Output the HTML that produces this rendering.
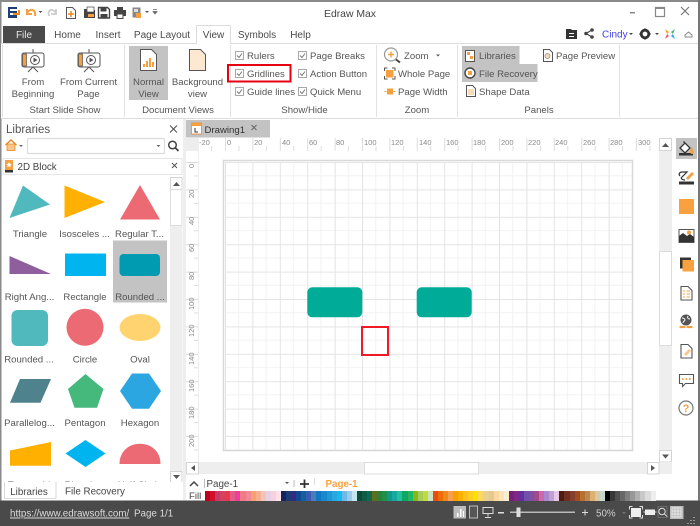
<!DOCTYPE html>
<html><head><meta charset="utf-8"><style>
html,body{margin:0;padding:0;width:700px;height:526px;overflow:hidden;background:#fff}
svg{position:absolute;left:0;top:0;font-family:"Liberation Sans",sans-serif;filter:blur(.35px)}
text{font-size:9.6px;fill:#4a4a4a}
.c{text-anchor:middle}
.r text{font-size:7.5px;fill:#8a8a8a}
.s{font-size:9.6px;fill:#555}
#pal{position:absolute;left:205px;top:491px;height:9.5px;display:flex;filter:blur(.35px)}
#pal i{display:block;width:5.07px;height:9.5px;flex:none}
</style></head><body>
<svg width="700" height="526" viewBox="0 0 700 526">
<defs>
<pattern id="g" patternUnits="userSpaceOnUse" x="225" y="162" width="27.4" height="27.4">
<rect width="27.4" height="27.4" fill="#fff"/>
<path d="M13.7 0V27.4M0 13.7H27.4" stroke="#f2f2f2" stroke-width="1" fill="none"/>
<path d="M.5 0V27.4M0 .5H27.4" stroke="#e4e4e4" stroke-width="1" fill="none"/>
</pattern>
<pattern id="rh" patternUnits="userSpaceOnUse" x="225" y="138" width="27.4" height="13">
<path d="M.5 0V13M14 8V13" stroke="#dcdcdc" fill="none"/>
</pattern>
<pattern id="rv" patternUnits="userSpaceOnUse" x="186" y="162" width="13" height="27.4">
<path d="M0 .5H13M8 14H13" stroke="#dcdcdc" fill="none"/>
</pattern>
</defs>
<rect width="700" height="526" fill="#fff"/>

<!-- window border -->
<rect x="0" y="0" width="700" height="2" fill="#8a8a8a"/>
<rect x="0" y="0" width="1.5" height="526" fill="#8a8a8a"/>
<rect x="698" y="0" width="2" height="526" fill="#777"/>

<!-- quick access -->
<rect x="8" y="7" width="9" height="11" fill="#1f3f78"/><rect x="10" y="9" width="7" height="2" fill="#fff"/><rect x="10" y="13" width="7" height="2" fill="#fff"/>
<path d="M13 14h6v-4" stroke="#f08a1c" stroke-width="2" fill="none"/>
<path d="M27 9l0 5 5 0M27 13c3-5 9-4 8 3" stroke="#f5a040" stroke-width="2" fill="none"/>
<path d="M38.500 11l4 0-2 2z" fill="#555"/>
<path d="M56 9v5h-5M56 13c-3-5-9-4-7 3" stroke="#ccc" stroke-width="1.800" fill="none"/>
<path d="M66.500 7.500h6l3 3v8h-9z" fill="#fff" stroke="#555"/><path d="M71 11v6M68 14h6" stroke="#f08a1c" stroke-width="1.500"/>
<path d="M84 9h4l1 1h6v8H84z" fill="#444"/><rect x="87" y="7" width="7" height="5" fill="#fff" stroke="#444" stroke-width=".7"/><rect x="88" y="14" width="6" height="3" fill="#f5a040"/>
<path d="M98.500 7.500h9l2 2v8.500h-11z" fill="#fff" stroke="#444" stroke-width="1.400"/><rect x="100.500" y="8" width="6" height="3.500" fill="#444"/><rect x="100.500" y="14" width="7" height="4" fill="#444"/>
<rect x="114" y="10" width="12" height="6" fill="#444"/><rect x="117" y="7" width="6" height="3" fill="#444"/><rect x="117" y="14" width="6" height="4.500" fill="#fff" stroke="#444"/>
<rect x="132.500" y="7.500" width="8" height="10" fill="#888"/><rect x="136" y="13" width="5" height="5" fill="#f5a040"/><rect x="134" y="9" width="4" height="3" fill="#ddd"/>
<path d="M145 11h4l-2 2z" fill="#555"/><path d="M153 9.500h4M153 11.500h4l-2 2.500z" stroke="#666" fill="#666" stroke-width=".8"/>
<text x="350" y="17" class="c" style="font-size:10.400px;fill:#444">Edraw Max</text>

<!-- window controls -->
<rect x="630" y="12" width="5" height="1.500" fill="#888"/>
<rect x="655.500" y="7.500" width="9" height="9" fill="none" stroke="#888" stroke-width="1.200"/><rect x="655.500" y="7" width="9" height="2" fill="#888"/>
<path d="M681 7l8 8M689 7l-8 8" stroke="#777" stroke-width="1.200"/>

<!-- right side top -->
<path d="M566 29h5l1 1h5v9h-11z" fill="#333"/><path d="M569 33h5v1h-5zM569 36h5v1h-5z" fill="#fff"/>
<path d="M592 30l-6 3.500 6 3.500" fill="none" stroke="#444" stroke-width="1.200"/><circle cx="592" cy="30" r="1.800" fill="#444"/><circle cx="586" cy="33.500" r="1.800" fill="#444"/><circle cx="592" cy="37" r="1.800" fill="#444"/>
<text x="602" y="37.500" style="fill:#3e3ee8;font-size:10px">Cindy</text>
<path d="M629 33h4l-2 2z" fill="#444"/>
<circle cx="645" cy="34" r="3.800" fill="none" stroke="#333" stroke-width="2.800"/>
<path d="M645 28.500v2M645 37.500v2M639.500 34h2M648.500 34h2" stroke="#333" stroke-width="2"/>
<path d="M655 33h4l-2 2z" fill="#444"/>
<path d="M665 29l4 3-2 2z" fill="#f5a623"/><path d="M675 29l-4 3 2 2z" fill="#3cb878"/><path d="M665 39l4-3-2-2z" fill="#ef5a7a"/><path d="M675 39l-4-3 2-2z" fill="#2ca6e0"/>
<path d="M685 35l3.500-3 3.500 3v2h-7z" fill="none" stroke="#888"/>

<!-- tabs -->
<rect x="3" y="26" width="42" height="17" fill="#4a4a4a"/>
<text x="24" y="38" class="c" style="fill:#e6e6e6;font-size:10px">File</text>
<text x="67.500" y="38" class="c" style="font-size:10px">Home</text>
<text x="108" y="38" class="c" style="font-size:10px">Insert</text>
<text x="162" y="38" class="c" style="font-size:10px">Page Layout</text>
<text x="213.500" y="38" class="c" style="font-size:10px">View</text>
<text x="257" y="38" class="c" style="font-size:10px">Symbols</text>
<text x="300.500" y="38" class="c" style="font-size:10px">Help</text>
<path d="M1 43.500H196.500V25.500H230.500V43.500H698" fill="none" stroke="#dcdcdc"/>

<!-- ribbon -->
<rect x="1" y="44" width="697" height="74" fill="#fff"/>
<path d="M2.500 45V117M124.500 45V117M230.500 45V117M376.500 45V117M457.500 45V117M619.500 45V117" stroke="#e2e2e2"/>
<path d="M1 118.500H698" stroke="#dcdcdc"/>
<!-- slide show icons -->
<g id="si">
<rect x="22" y="53" width="22" height="14" rx="2" fill="#fff" stroke="#555"/><path d="M33 49v4M33 67l-5 5M33 67l5 5" stroke="#555"/>
<rect x="22.500" y="54" width="4" height="12" fill="#f5a040" stroke="#555" stroke-width=".7"/><circle cx="35" cy="60" r="4.500" fill="#fff" stroke="#555"/><path d="M33.500 57.500l4 2.500-4 2.500z" fill="#555"/>
</g>
<g transform="translate(56 0)">
<rect x="22" y="53" width="22" height="14" rx="2" fill="#fff" stroke="#555"/><path d="M33 49v4M33 67l-5 5M33 67l5 5" stroke="#555"/>
<rect x="22.500" y="54" width="4" height="12" fill="#f5a040" stroke="#555" stroke-width=".7"/><circle cx="35" cy="60" r="4.500" fill="#fff" stroke="#555"/><path d="M33.500 57.500l4 2.500-4 2.500z" fill="#555"/>
</g>
<text x="33" y="85" class="c s">From</text><text x="33" y="97" class="c s">Beginning</text>
<text x="88.500" y="85" class="c s">From Current</text><text x="88.500" y="97" class="c s">Page</text>
<text x="65" y="113" class="c s">Start Slide Show</text>
<!-- document views -->
<rect x="129" y="46" width="39" height="54" fill="#c3c3c3"/>
<path d="M140.500 49.500h11l5 5v16h-16z" fill="#fff" stroke="#555"/>
<path d="M143 67v-3h2v3zM146 67v-6h2v6zM149 67v-9h2v9zM152 67v-5h2v5z" fill="#f5a040"/>
<text x="148.500" y="85" class="c s">Normal</text><text x="148.500" y="97" class="c s">View</text>
<path d="M189.500 49.500h11l5 5v16h-16z" fill="#fde9d2" stroke="#555"/>
<text x="197.500" y="85" class="c s">Background</text><text x="197.500" y="97" class="c s">view</text>
<text x="178" y="113" class="c s">Document Views</text>
<!-- show/hide -->
<g fill="#fff" stroke="#a8a8a8">
<rect x="235.500" y="51.500" width="8" height="8"/><rect x="235.500" y="69.500" width="8" height="8"/><rect x="235.500" y="87.500" width="8" height="8"/>
<rect x="298.500" y="51.500" width="8" height="8"/><rect x="298.500" y="69.500" width="8" height="8"/><rect x="298.500" y="87.500" width="8" height="8"/>
</g>
<path d="M237 55.500l2 2 3-4M237 73.500l2 2 3-4M237 91.500l2 2 3-4M300 55.500l2 2 3-4M300 73.500l2 2 3-4M300 91.500l2 2 3-4" fill="none" stroke="#777"/>
<text x="247" y="59" class="s">Rulers</text><text x="247" y="77" class="s">Gridlines</text><text x="247" y="95" class="s">Guide lines</text>
<text x="310" y="59" class="s">Page Breaks</text><text x="310" y="77" class="s">Action Button</text><text x="310" y="95" class="s">Quick Menu</text>
<text x="304.500" y="113" class="c s">Show/Hide</text>
<rect x="228" y="65" width="62.500" height="16.500" fill="none" stroke="#e60012" stroke-width="2"/>
<!-- zoom -->
<circle cx="391" cy="54.500" r="6.500" fill="#fff" stroke="#999" stroke-width="1.200"/><path d="M391 51.500v6M388 54.500h6" stroke="#f5a040" stroke-width="1.500"/><path d="M396 59.500l4 3" stroke="#444" stroke-width="2"/>
<text x="404" y="59" class="s">Zoom</text><path d="M436 54.500h4l-2 2z" fill="#555"/>
<rect x="386" y="70" width="7.500" height="7.500" fill="#f5a040"/><path d="M384.500 71v-3h3M392 68h3v3M395 76v3h-3M387.500 79h-3v-3" fill="none" stroke="#555"/>
<text x="398" y="77" class="s">Whole Page</text>
<rect x="387" y="88.500" width="6" height="6" fill="#f5a040"/><path d="M384.500 91.500h2M393.500 91.500h2" stroke="#f5a040"/>
<text x="398" y="95" class="s">Page Width</text>
<text x="417" y="113" class="c s">Zoom</text>
<!-- panels -->
<path d="M462 46h57.500v18h18v18h-75.500z" fill="#c3c3c3"/>
<rect x="465.500" y="50.500" width="9" height="11" fill="#fff" stroke="#555"/><rect x="467" y="52" width="3" height="3" fill="#f5a040"/><rect x="470" y="56" width="3" height="3" fill="#f5a040"/>
<circle cx="470" cy="73" r="5" fill="#fff" stroke="#444" stroke-width="1.400"/><rect x="468" y="71" width="4" height="4" fill="#f5a040"/>
<text x="479" y="59" class="s">Libraries</text><text x="479" y="77" class="s">File Recovery</text>
<path d="M466.500 85.500h6l3 3v8h-9z" fill="#fff" stroke="#555"/><path d="M468 90h6M468 92h6M468 94h6" stroke="#f5a040" stroke-width=".8"/>
<text x="479" y="95" class="s">Shape Data</text>
<path d="M543.500 49.500h6l3 3v9h-9z" fill="#fff" stroke="#555"/><circle cx="547.500" cy="56" r="2.500" fill="#fbd9b5" stroke="#888" stroke-width=".7"/>
<text x="556" y="59" class="s">Page Preview</text>
<text x="539" y="113" class="c s">Panels</text>

<!-- left panel -->
<text x="6" y="133" style="font-size:11.500px;fill:#555">Libraries</text>
<path d="M170 125.500l7 7M177 125.500l-7 7" stroke="#555" stroke-width="1.100"/>
<path d="M5.500 145l5.500-5 5.500 5" fill="none" stroke="#e88a2a" stroke-width="1.500"/><rect x="7" y="144" width="8" height="6.500" fill="#fbc58a" stroke="#e88a2a" stroke-width=".8"/>
<path d="M19 145h4l-2 2z" fill="#666"/>
<rect x="27.500" y="138.500" width="137" height="15" rx="1" fill="#fff" stroke="#dcdcdc" stroke-width="1.200"/>
<path d="M156.500 145h4l-2 2z" fill="#666"/>
<circle cx="172.500" cy="145" r="3.800" fill="none" stroke="#444" stroke-width="1.500"/><path d="M175.500 148l3 3" stroke="#444" stroke-width="1.800"/>
<rect x="3" y="158.500" width="179" height="16" fill="#fff" stroke="#e6e6e6"/>
<rect x="5" y="160" width="8" height="10" fill="#f5a040"/><rect x="5" y="170" width="8" height="2.500" fill="#333"/><path d="M9 162l.9 1.800 1.900.2-1.400 1.300.4 1.900-1.800-1-1.800 1 .4-1.900-1.400-1.300 1.900-.2z" fill="#fff"/>
<text x="17.500" y="170" style="font-size:9.800px;fill:#444">2D Block</text>
<path d="M172 163l5 5M177 163l-5 5" stroke="#555"/>

<rect x="113" y="240.500" width="54" height="62" fill="#c3c3c3"/>
<path d="M23 185.500L50 204.500L9.500 218z" fill="#4fb9bd"/>
<path d="M64.500 185.500L105 202L64.500 218z" fill="#ffb000"/>
<path d="M140 185L160 219.500H120z" fill="#ec6a73"/>
<path d="M9.500 256L51 274H9.500z" fill="#8f5e9c"/>
<rect x="65" y="253.500" width="41" height="22.500" fill="#00b4f0"/>
<rect x="119.500" y="254" width="40.500" height="22" rx="4" fill="#009bb0"/>
<rect x="11.500" y="310" width="36.500" height="36" rx="6" fill="#4fb9bd"/>
<circle cx="85" cy="327.300" r="18.500" fill="#ec6a73"/>
<ellipse cx="140" cy="327.500" rx="20.500" ry="13.500" fill="#ffd36f"/>
<path d="M20 379H51L40.500 402.800H10z" fill="#4e828c"/>
<path d="M85.500 374L103.500 389L97 407.800H74.500L68 389z" fill="#45b87c"/>
<path d="M120 391L132 373.500H149L161 391L149 408.800H132z" fill="#2ca6e0"/>
<path d="M10 450.500L51 442V465.800H10z" fill="#ffb000"/>
<path d="M65.500 453.500L85.500 440L105.500 453.500L85.500 467z" fill="#00b4f0"/>
<path d="M119.500 464C119.500 437 160.500 437 160.500 464z" fill="#ec6a73"/>
<g class="c">
<text x="30" y="237" class="c s">Triangle</text><text x="84.500" y="237" class="c s">Isosceles ...</text><text x="139.500" y="237" class="c s">Regular T...</text>
<text x="29.500" y="300" class="c s">Right Ang...</text><text x="85" y="300" class="c s">Rectangle</text><text x="140" y="300" class="c s">Rounded ...</text>
<text x="29" y="362.500" class="c s">Rounded ...</text><text x="85" y="362.500" class="c s">Circle</text><text x="140" y="362.500" class="c s">Oval</text>
<text x="29.500" y="426" class="c s">Parallelog...</text><text x="85" y="426" class="c s">Pentagon</text><text x="140" y="426" class="c s">Hexagon</text>
<text x="29" y="488" class="c s">Trapezoid</text><text x="85" y="488" class="c s">Rhombus</text><text x="140" y="488" class="c s">Half Circle</text>
</g>
<rect x="170" y="177" width="12.500" height="306" fill="#eeeeee"/>
<rect x="170.500" y="177.500" width="11.500" height="12" fill="#fff" stroke="#d4d4d4"/><path d="M173 186l3.500-4 3.500 4z" fill="#555"/>
<rect x="170.500" y="189.500" width="11.500" height="36" fill="#fff" stroke="#dcdcdc"/>
<rect x="170.500" y="471.500" width="11.500" height="12" fill="#fff" stroke="#d4d4d4"/><path d="M173 475h7l-3.500 4z" fill="#555"/>
<rect x="2" y="482" width="181" height="18" fill="#fff"/>
<path d="M4.500 482v16.500h51.500v-16.500" fill="#fff" stroke="#dadada"/>
<text x="29" y="495" class="c" style="font-size:9.800px;fill:#444">Libraries</text>
<text x="65" y="494.500" style="font-size:9.800px;fill:#444">File Recovery</text>

<!-- center -->
<rect x="183" y="119" width="3" height="381" fill="#eeeeee"/>
<rect x="186" y="120" width="84" height="17.500" fill="#c3c3c3"/>
<rect x="191.500" y="123" width="10" height="11" fill="#fff" stroke="#e88a2a" stroke-width=".8"/><rect x="191.500" y="123" width="10" height="3" fill="#f5a040"/><path d="M195 128v4h3" stroke="#333" fill="none"/>
<text x="204.500" y="133" style="font-size:9.600px;fill:#333">Drawing1</text>
<path d="M251.500 125l5 5M256.500 125l-5 5" stroke="#666"/>
<rect x="186" y="138" width="473" height="13" fill="#fff"/>
<rect x="198" y="138" width="461" height="13" fill="url(#rh)"/>
<rect x="186" y="151" width="12.500" height="311" fill="#fff"/>
<rect x="186" y="151" width="12.500" height="311" fill="url(#rv)"/>
<rect x="186" y="138" width="12.500" height="13" fill="#ededed"/>
<path d="M198.500 138V462" stroke="#eee"/>
<g class="r">
<text x="199" y="145">-20</text><text x="227" y="145">0</text><text x="254" y="145">20</text><text x="282" y="145">40</text><text x="309" y="145">60</text><text x="336" y="145">80</text><text x="364" y="145">100</text><text x="391" y="145">120</text><text x="419" y="145">140</text><text x="446" y="145">160</text><text x="473" y="145">180</text><text x="501" y="145">200</text><text x="528" y="145">220</text><text x="555" y="145">240</text><text x="583" y="145">260</text><text x="610" y="145">280</text><text x="638" y="145">300</text>
<text transform="translate(194 168) rotate(-90)">0</text>
<text transform="translate(194 198) rotate(-90)">20</text>
<text transform="translate(194 225) rotate(-90)">40</text>
<text transform="translate(194 252) rotate(-90)">60</text>
<text transform="translate(194 280) rotate(-90)">80</text>
<text transform="translate(194 310) rotate(-90)">100</text>
<text transform="translate(194 337) rotate(-90)">120</text>
<text transform="translate(194 365) rotate(-90)">140</text>
<text transform="translate(194 392) rotate(-90)">160</text>
<text transform="translate(194 419) rotate(-90)">180</text>
<text transform="translate(194 447) rotate(-90)">200</text>
</g>
<rect x="223.500" y="160.500" width="409" height="290" fill="#fff" stroke="#d8d8d8" stroke-width="1.500"/>
<rect x="225" y="162" width="406.500" height="287.500" fill="url(#g)"/>
<rect x="307.300" y="287.300" width="55" height="30" rx="5" fill="#00ab98"/>
<rect x="416.700" y="287.300" width="55" height="30" rx="5" fill="#00ab98"/>
<rect x="362" y="327" width="26" height="28" fill="none" stroke="#f01a24" stroke-width="2"/>

<!-- scrollbars -->
<rect x="659" y="138" width="13" height="336" fill="#eeeeee"/>
<rect x="659.500" y="138.500" width="12" height="12" fill="#fff" stroke="#d4d4d4"/><path d="M662 147l3.500-4 3.500 4z" fill="#555"/>
<rect x="659.500" y="251.500" width="12" height="94" fill="#fff" stroke="#dcdcdc"/>
<rect x="659.500" y="450.500" width="12" height="11.500" fill="#fff" stroke="#d4d4d4"/><path d="M662 454.500h7l-3.500 4z" fill="#555"/>
<rect x="186" y="462" width="486" height="12" fill="#eeeeee"/>
<rect x="186.500" y="462.500" width="12" height="11.500" fill="#fff" stroke="#d4d4d4"/><path d="M195 465v6l-4-3z" fill="#555"/>
<rect x="364.500" y="462.500" width="114" height="11.500" fill="#fff" stroke="#dcdcdc"/>
<rect x="647.500" y="462.500" width="11.500" height="11.500" fill="#fff" stroke="#d4d4d4"/><path d="M651 465v6l4-3z" fill="#555"/>

<!-- page bar -->
<path d="M190 486l4-4 4 4" fill="none" stroke="#444" stroke-width="1.500"/>
<path d="M204.500 479v9M294 480v7" stroke="#bbb"/><path d="M314.500 478v7" stroke="#ddd"/>
<text x="206.500" y="487" style="font-size:9.800px;fill:#444">Page-1</text>
<path d="M285 482h4l-2 2z" fill="#555"/>
<path d="M304.500 479.500v8.500M300 484h9" stroke="#333" stroke-width="1.800"/>
<text x="325.500" y="487" style="font-size:9.800px;fill:#f9a03f;font-weight:bold">Page-1</text>
<text x="189" y="499" style="font-size:9.600px;fill:#444">Fill</text>

<!-- status bar -->
<rect x="0" y="500.500" width="700" height="25.500" fill="#4a4a4a"/>
<text x="10" y="516.500" style="font-size:9.800px;fill:#dcdcdc;text-decoration:underline">https://www.edrawsoft.com/</text>
<text x="134" y="516.500" style="font-size:9.800px;fill:#dcdcdc">Page 1/1</text>
<rect x="453.500" y="506" width="12.500" height="12.500" fill="#bdbdbd"/><path d="M457 517v-4h1.500v4zM460 517v-8h1.500v8zM463 517v-6h1v6z" fill="#fff"/>
<rect x="469.500" y="506" width="8" height="12" fill="#555" stroke="#bbb"/>
<path d="M483 507.500h10v6h-10zM488 513.500v3M485 517.500h6" fill="#4a4a4a" stroke="#ddd"/>
<rect x="498" y="512" width="6" height="1.500" fill="#ddd"/>
<rect x="510" y="511.500" width="65" height="1.500" fill="#bbb"/><rect x="516.500" y="507.500" width="4" height="9.500" fill="#ddd"/>
<path d="M582 512.500h6M585 509.500v6" stroke="#ddd"/>
<text x="596" y="516.500" style="font-size:9.800px;fill:#cfcfcf">50%</text>
<path d="M622 512h4l-2 2z" fill="#777"/>
<rect x="631" y="508" width="10" height="9" fill="#eee"/><path d="M629.500 509.500v-3h3M639.500 506.500h3v3M642.500 515v3h-3M632.500 518h-3v-3" stroke="#ddd" fill="none"/>
<rect x="645" y="509.500" width="10" height="5.500" fill="#eee"/><path d="M643.500 512h1.500M655 512h1.500" stroke="#ddd"/>
<circle cx="662" cy="511.500" r="3.200" fill="none" stroke="#ddd"/><path d="M664.500 514l3 3" stroke="#ddd"/><path d="M658 506.500h9v11h-9z" fill="none" stroke="#888" stroke-width=".6"/>
<rect x="670" y="506" width="13.500" height="13" fill="#bdbdbd"/><path d="M672 508h9v9h-9zM672 511h9M672 514h9M675 508v9M678 508v9" fill="none" stroke="#eee" stroke-width=".7"/>
<path d="M694 517v1M691 520v1M694 520v1M688 523v1M691 523v1M694 523v1" stroke="#ddd"/>

<!-- right toolbar -->
<rect x="676" y="138" width="21" height="21" fill="#c3c3c3"/>
<path d="M680 148l5-5 5 5-5 5z" fill="#fff" stroke="#333" stroke-width="1.300"/><path d="M684 143v-2" stroke="#333"/><rect x="679" y="153" width="14" height="2.500" fill="#333"/><path d="M691 147c2 2 3 4 3 5s-1 2-2 2-2-1-2-2z" fill="#f5a040"/>
<path d="M680 176c-2-2 0-4 2-4s5 0 5 0l-5 5c-2 1 0 3 3 3" fill="none" stroke="#333" stroke-width="1.200"/><path d="M686 178l6-6 2 2-6 6z" fill="#f5a040"/><rect x="679" y="181.500" width="15" height="3" fill="#333"/>
<rect x="679" y="199" width="15" height="15" fill="#f9a03f"/>
<rect x="679" y="229.500" width="15" height="13" fill="#fff" stroke="#555"/><path d="M679 242v-6l4-3 4 3 3-2 4 3v5z" fill="#333"/><circle cx="689" cy="232.500" r="2" fill="#f5a040"/>
<rect x="680" y="257.500" width="11" height="11" fill="#333"/><rect x="682.500" y="260" width="11.500" height="11.500" fill="#f9a03f"/>
<path d="M681 286.500h7l4 4v9.500h-11z" fill="#fff" stroke="#555" stroke-width="1.100"/><path d="M683 291h2M686.500 291h3.500M683 294h2M686.500 294h3.500M683 297h2M686.500 297h3.500" stroke="#f5a040"/>
<circle cx="686" cy="320" r="5.500" fill="#555"/><path d="M682 318c2 0 3 1 3 2s-2 1-2 3M688 316c-1 2 0 3 2 3" stroke="#fff" fill="none"/><path d="M680.500 327h4M687.500 327h4" stroke="#f5a040" stroke-width="2.200" stroke-linecap="round"/>
<path d="M681 344.500h7l4 4v9.500h-11z" fill="#fff" stroke="#555" stroke-width="1.100"/><path d="M684 354l5-5 2 2-5 5z" fill="#fbc58a"/>
<path d="M679.500 374.500h14v9h-8l-3 3v-3h-3z" fill="#fff" stroke="#555" stroke-width="1.100"/><path d="M682 379h1.800M685.500 379h1.800M689 379h1.800" stroke="#f5a040" stroke-width="1.800"/>
<circle cx="686" cy="408" r="7" fill="#fff" stroke="#777" stroke-width="1.200"/>
<text x="686" y="412" class="c" style="font-size:11px;font-weight:bold;fill:#f5a040">?</text>
</svg>

<div id="pal">
<i style="background:#c00018"></i><i style="background:#d0102c"></i><i style="background:#c8386a"></i><i style="background:#d84060"></i><i style="background:#e8384c"></i><i style="background:#e45a88"></i><i style="background:#ea3f9a"></i><i style="background:#ee7c84"></i><i style="background:#f08898"></i><i style="background:#f7a070"></i><i style="background:#f4b090"></i><i style="background:#f4c4b8"></i><i style="background:#e8d0e4"></i><i style="background:#f9d0e0"></i><i style="background:#fde0ea"></i>
<i style="background:#12245c"></i><i style="background:#1c3a78"></i><i style="background:#352a80"></i><i style="background:#0e4a94"></i><i style="background:#14609c"></i><i style="background:#3a5cb0"></i><i style="background:#5078bc"></i><i style="background:#0e78c0"></i><i style="background:#1888d0"></i><i style="background:#2098d8"></i><i style="background:#28a8e0"></i><i style="background:#18b8f0"></i><i style="background:#70b8e8"></i><i style="background:#98cce8"></i><i style="background:#c4e4f0"></i>
<i style="background:#0c4c30"></i><i style="background:#0c5c48"></i><i style="background:#106850"></i><i style="background:#5c7020"></i><i style="background:#2c8038"></i><i style="background:#209048"></i><i style="background:#10988c"></i><i style="background:#18a8a0"></i><i style="background:#20c0a8"></i><i style="background:#10a860"></i><i style="background:#20b868"></i><i style="background:#88b818"></i><i style="background:#a8cc58"></i><i style="background:#c4d840"></i><i style="background:#c8e4c0"></i>
<i style="background:#e84c10"></i><i style="background:#f06c08"></i><i style="background:#f08818"></i><i style="background:#f4a050"></i><i style="background:#f8a000"></i><i style="background:#fcb000"></i><i style="background:#fcc020"></i><i style="background:#fcd020"></i><i style="background:#fce000"></i><i style="background:#fcd860"></i><i style="background:#e8d090"></i><i style="background:#e8c890"></i><i style="background:#fcd8a0"></i><i style="background:#fce4b8"></i><i style="background:#fcecd0"></i>
<i style="background:#782078"></i><i style="background:#802888"></i><i style="background:#6030a0"></i><i style="background:#7050a8"></i><i style="background:#8050a0"></i><i style="background:#a04890"></i><i style="background:#d068a8"></i><i style="background:#a888d0"></i><i style="background:#c0a0d0"></i><i style="background:#e8c8e4"></i>
<i style="background:#4c1c10"></i><i style="background:#703020"></i><i style="background:#84402c"></i><i style="background:#a04c20"></i><i style="background:#b87030"></i><i style="background:#b88858"></i><i style="background:#e0b070"></i><i style="background:#d8c8a8"></i><i style="background:#c8d8c8"></i>
<i style="background:#000"></i><i style="background:#383838"></i><i style="background:#505050"></i><i style="background:#686868"></i><i style="background:#808080"></i><i style="background:#989898"></i><i style="background:#b0b0b0"></i><i style="background:#c8c8c8"></i><i style="background:#dcdcdc"></i><i style="background:#eeeeee"></i>
</div>
</body></html>
